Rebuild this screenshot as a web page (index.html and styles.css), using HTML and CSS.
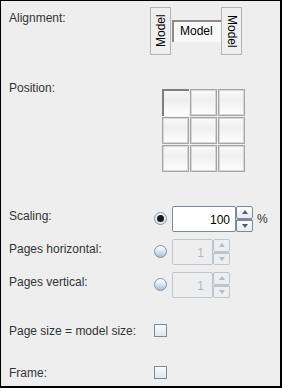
FILE: index.html
```html
<!DOCTYPE html>
<html lang="en">
<head>
    <meta charset="UTF-8">
    <title>Print Settings</title>
    <link rel="stylesheet" href="styles.css">
</head>
<body>
    <div class="panel">
        <div class="row row-align">
            <div class="label label-align">Alignment:</div>
            <div class="align-box">
                <div class="vbtn vbtn-left">Model</div>
                <div class="model-label">Model</div>
                <div class="vbtn vbtn-right">Model</div>
            </div>
        </div>

        <div class="row row-pos">
            <div class="label">Position:</div>
            <div class="pos-grid">
                <div class="cell selected"></div>
                <div class="cell"></div>
                <div class="cell"></div>
                <div class="cell"></div>
                <div class="cell"></div>
                <div class="cell"></div>
                <div class="cell"></div>
                <div class="cell"></div>
                <div class="cell"></div>
            </div>
        </div>

        <div class="row row-field row-scaling">
            <div class="label label-field">Scaling:</div>
            <div class="radio checked"></div>
            <div class="field wide">100</div>
            <div class="spinner">
                <div class="spin-btn"><span class="arrow-up"></span></div>
                <div class="spin-btn"><span class="arrow-down"></span></div>
            </div>
            <div class="unit">%</div>
        </div>

        <div class="row row-field">
            <div class="label label-field">Pages horizontal:</div>
            <div class="radio"></div>
            <div class="field disabled">1</div>
            <div class="spinner disabled">
                <div class="spin-btn"><span class="arrow-up"></span></div>
                <div class="spin-btn"><span class="arrow-down"></span></div>
            </div>
        </div>

        <div class="row row-field">
            <div class="label label-field">Pages vertical:</div>
            <div class="radio"></div>
            <div class="field disabled">1</div>
            <div class="spinner disabled">
                <div class="spin-btn"><span class="arrow-up"></span></div>
                <div class="spin-btn"><span class="arrow-down"></span></div>
            </div>
        </div>

        <div class="row row-check">
            <div class="label">Page size = model size:</div>
            <div class="checkbox"></div>
        </div>

        <div class="row row-check row-frame">
            <div class="label">Frame:</div>
            <div class="checkbox"></div>
        </div>
    </div>
</body>
</html>
```

FILE: styles.css
```css
body {
    margin: 0;
    font-family: "Liberation Sans", Arial, sans-serif;
    font-size: 12px;
    line-height: 14px;
    color: #333;
}

.panel {
    box-sizing: border-box;
    width: 282px;
    height: 388px;
    background-color: #eeeeee;
    border: 1px solid #000;
    border-right-width: 2px;
    border-bottom-width: 2px;
    padding: 6px 0 0 8px;
}

.row {
    display: flex;
    align-items: flex-start;
}

.label {
    flex: none;
    width: 141px;
    white-space: nowrap;
}

/* Alignment */
.row-align {
    height: 48px;
}

.label-align {
    margin-top: 4px;
}

.align-box {
    display: flex;
    align-items: center;
    height: 48px;
}

.vbtn {
    box-sizing: border-box;
    width: 21px;
    height: 48px;
    border: 1px solid #b4b4b4;
    background-color: #efefef;
    color: #000;
    writing-mode: vertical-rl;
    display: flex;
    align-items: center;
    justify-content: center;
}

.vbtn-left {
    transform: rotate(180deg);
    margin-right: 1px;
}

.model-label {
    box-sizing: border-box;
    width: 49px;
    height: 22px;
    border-top: 2px solid #8a8a8a;
    border-left: 2px solid #8a8a8a;
    background-color: #f8f8f8;
    color: #000;
    padding: 2px 0 0 6px;
}

/* Position */
.row-pos {
    margin-top: 26px;
}

.pos-grid {
    margin: 8px 0 0 12px;
    display: grid;
    grid-template-columns: repeat(3, 27px);
    grid-template-rows: repeat(3, 27px);
    gap: 1px;
}

.cell {
    box-sizing: border-box;
    border: 1px solid #a6a6a6;
    box-shadow: inset 0 0 0 1px #d6d6d6;
    background: linear-gradient(#fbfbfb, #efefef 40%, #f6f6f6 65%, #fdfdfd);
}

.cell.selected {
    border: none;
    border-top: 2px solid #7e7e7e;
    border-left: 2px solid #7e7e7e;
    box-shadow: none;
    background: linear-gradient(#f6f6f6, #ededed 40%, #f6f6f6 65%, #ffffff);
}

/* Scaling and pages */
.row-field {
    height: 26px;
    margin-top: 7px;
}

.row-scaling {
    margin-top: 34px;
}

.label-field {
    margin-top: 3px;
}

.radio {
    box-sizing: border-box;
    flex: none;
    width: 13px;
    height: 13px;
    margin: 6px 5px 0 4px;
    border-radius: 50%;
    border: 1px solid #8094a8;
    background: linear-gradient(#ffffff, #e0e8f0 45%, #a9bccf);
    position: relative;
}

.radio.checked {
    background: linear-gradient(#f4f6f8, #dbe3eb);
}

.radio.checked::after {
    content: "";
    position: absolute;
    left: 2px;
    top: 2px;
    width: 7px;
    height: 7px;
    border-radius: 50%;
    background-color: #1a1a1a;
}

.field {
    box-sizing: border-box;
    width: 41px;
    height: 26px;
    border: 1px solid #bcc6d0;
    border-radius: 2px;
    background-color: #eeeeee;
    color: #a9bbcd;
    text-align: right;
    padding: 6px 8px 0 0;
}

.field.wide {
    width: 64px;
    padding-right: 5px;
    border-color: #7a8a99;
    background-color: #fff;
    color: #000;
}

.spinner {
    box-sizing: border-box;
    width: 17px;
    height: 26px;
    display: flex;
    flex-direction: column;
}

.spin-btn {
    box-sizing: border-box;
    flex: 1;
    border: 1px solid #7a8a99;
    border-radius: 2px;
    background: linear-gradient(#fbfbfb, #e8ecf0);
    display: flex;
    align-items: center;
    justify-content: center;
}

.spinner .spin-btn + .spin-btn {
    border-top-width: 2px;
}

.arrow-up,
.arrow-down {
    width: 0;
    height: 0;
    border-left: 3px solid transparent;
    border-right: 3px solid transparent;
}

.arrow-up {
    border-bottom: 4px solid #4d5e70;
}

.arrow-down {
    border-top: 4px solid #4d5e70;
}

.spinner.disabled .spin-btn {
    border-color: #bcc6d0;
    background: #eeeeee;
}

.spinner.disabled .arrow-up {
    border-bottom-color: #b0bccb;
}

.spinner.disabled .arrow-down {
    border-top-color: #b0bccb;
}

.unit {
    margin: 6px 0 0 4px;
}

/* Checkboxes */
.row-check {
    margin-top: 26px;
    height: 14px;
}

.row-frame {
    margin-top: 28px;
}

.checkbox {
    box-sizing: border-box;
    width: 13px;
    height: 13px;
    margin-left: 4px;
    border: 1px solid #7a8a99;
    background: linear-gradient(#fafbfc, #dfe6ed);
}
```
